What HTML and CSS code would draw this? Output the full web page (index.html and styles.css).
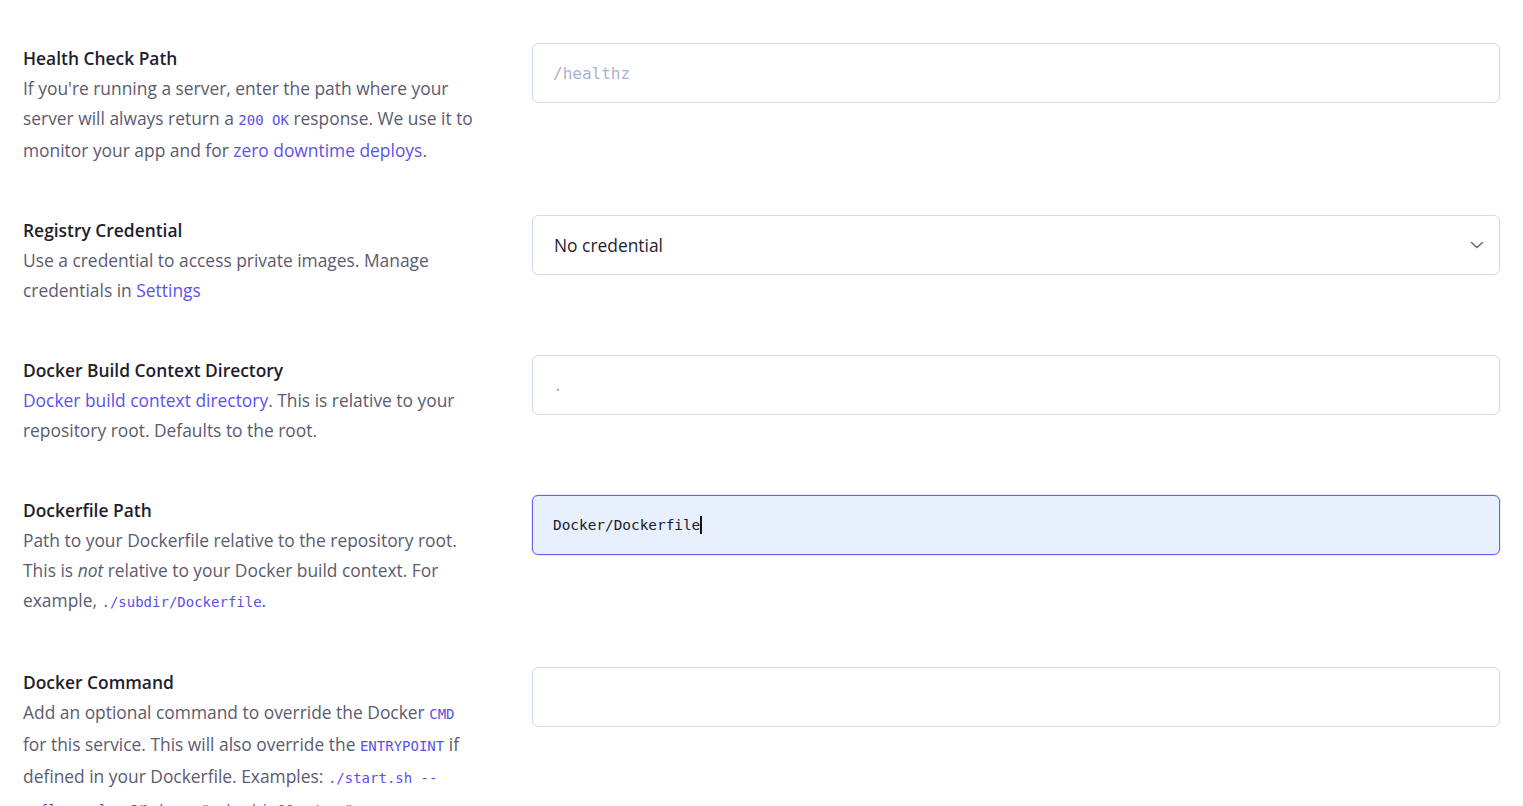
FILE: index.html
```html
<!DOCTYPE html>
<html lang="en">
<head>
<meta charset="utf-8">
<title>Service settings</title>
<link rel="stylesheet" href="styles.css">
</head>
<body>
<main class="form">
  <section class="row">
    <div class="info">
      <h3 class="label">Health Check Path</h3>
      <p class="desc">If you're running a server, enter the path where your server will always return a <code>200 OK</code> response. We use it to monitor your app and for <a href="#">zero downtime deploys</a>.</p>
    </div>
    <div class="field">
      <input class="input mono ph" type="text" placeholder="/healthz">
    </div>
  </section>

  <section class="row">
    <div class="info">
      <h3 class="label">Registry Credential</h3>
      <p class="desc">Use a credential to access private images. Manage credentials in <a href="#">Settings</a></p>
    </div>
    <div class="field">
      <div class="select">
        <span>No credential</span>
        <svg class="chev" width="14" height="8" viewBox="0 0 14 8"><path d="M1.5 1.5 7 6.5l5.5-5" fill="none" stroke="#6b6a7d" stroke-width="1.6" stroke-linecap="round" stroke-linejoin="round"/></svg>
      </div>
    </div>
  </section>

  <section class="row">
    <div class="info">
      <h3 class="label">Docker Build Context Directory</h3>
      <p class="desc"><a href="#">Docker build context directory</a>. This is relative to your repository root. Defaults to the root.</p>
    </div>
    <div class="field">
      <input class="input mono ph" type="text" placeholder=".">
    </div>
  </section>

  <section class="row">
    <div class="info">
      <h3 class="label">Dockerfile Path</h3>
      <p class="desc">Path to your Dockerfile relative to the repository root. This is <em>not</em> relative to your Docker build context. For example, <code>./subdir/Dockerfile</code>.</p>
    </div>
    <div class="field">
      <div class="input mono focused"><span>Docker/Dockerfile</span><span class="caret"></span></div>
    </div>
  </section>

  <section class="row">
    <div class="info">
      <h3 class="label">Docker Command</h3>
      <p class="desc">Add an optional command to override the Docker <code>CMD</code> for this service. This will also override the <code>ENTRYPOINT</code> if defined in your Dockerfile. Examples: <code>./start.sh --</code> <code>myflag=value</code> or <code>sh -c "echo hi &amp;&amp; ./run"</code></p>
    </div>
    <div class="field">
      <input class="input mono" type="text">
    </div>
  </section>
</main>
</body>
</html>
```

FILE: styles.css
```css
* { box-sizing: border-box; }
html, body { margin: 0; padding: 0; background: #ffffff; }
body {
  font-family: "Open Sans", Lato, sans-serif;
  color: #5c5b6f;
  overflow: hidden;
  height: 806px;
}
.form {
  padding: 43px 23px 0 23px;
  display: flex;
  flex-direction: column;
  gap: 50px;
}
.row {
  display: grid;
  grid-template-columns: 1fr 2fr;
  column-gap: 25px;
  align-items: start;
}
.info { max-width: 455px; }
.label {
  margin: 0;
  font-size: 17.4px;
  line-height: 30px;
  font-weight: 600;
  color: #1f1d2e;
}
.desc {
  margin: 0;
  font-size: 17.4px;
  line-height: 30px;
  color: #5c5b6f;
}
.desc a { color: #5b52ee; text-decoration: none; }
.desc em { font-style: italic; }
code {
  display: inline-block;
  vertical-align: top;
  font-family: "DejaVu Sans Mono", "Liberation Mono", monospace;
  font-size: 14px;
  line-height: 30px;
  padding: 1.5px 0 0.5px;
  color: #5a52e8;
  white-space: nowrap;
}
.input, .select {
  display: flex;
  align-items: center;
  width: 100%;
  height: 60px;
  border: 1px solid #cfdaee;
  border-radius: 6px;
  background: #ffffff;
  padding: 0 20px;
  font-size: 16px;
  color: #1f1d2e;
  outline: none;
}
.mono { font-family: "DejaVu Sans Mono", "Liberation Mono", monospace; font-size: 14.4px; }
.ph { font-size: 16px; }
.input::placeholder { color: #a9b2cf; }
.select {
  justify-content: space-between;
  font-family: "Open Sans", Lato, sans-serif;
  font-size: 17.4px;
  padding: 0 15px 0 21px;
}
.focused {
  background: #e8effd;
  border-color: #6a5ff3;
  box-shadow: 0 0 0 1px rgba(106, 95, 243, 0.15);
  color: #1a1a2a;
}
.caret {
  display: inline-block;
  width: 2px;
  height: 18px;
  background: #111;
}
```
